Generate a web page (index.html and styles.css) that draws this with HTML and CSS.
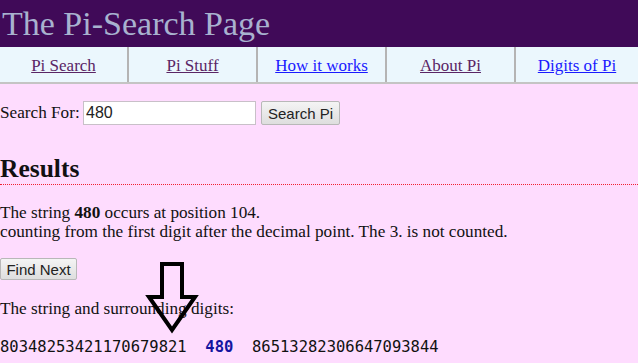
FILE: index.html
```html
<!DOCTYPE html>
<html lang="en">
<head>
  <meta charset="UTF-8">
  <title>The Pi-Search Page</title>
  <link rel="stylesheet" href="styles.css">
</head>
<body>
  <h1 class="banner">The Pi-Search Page</h1>
  <div class="nav">
    <div class="nav-cell"><a class="visited" href="#">Pi Search</a></div>
    <div class="nav-cell"><a class="visited" href="#">Pi Stuff</a></div>
    <div class="nav-cell"><a href="#">How it works</a></div>
    <div class="nav-cell"><a class="visited" href="#">About Pi</a></div>
    <div class="nav-cell"><a href="#">Digits of Pi</a></div>
  </div>

  <form class="search">
    <label for="q">Search For:</label>
    <input type="text" id="q" value="480">
    <button type="button">Search Pi</button>
  </form>

  <h2 class="results">Results</h2>
  <p class="found">The string <b>480</b> occurs at position 104.<br>counting from the first digit after the decimal point. The 3. is not counted.</p>
  <button type="button" class="next">Find Next</button>
  <p class="around">The string and surrounding digits:</p>
  <pre class="digits">80348253421170679821  <span class="hit">480</span>  86513282306647093844</pre>

  <!-- arrow drawn over the text -->
  <svg class="arrow" width="70" height="85" viewBox="140 255 70 85">
    <polygon points="162,264 182,264 182,297 195,297 172,330 149,297 162,297" fill="none" stroke="#000" stroke-width="4" stroke-linejoin="miter"/>
  </svg>
</body>
</html>
```

FILE: styles.css
```css
body {
  margin: 0;
  background-color: #fedcfe;
  font-family: "Liberation Serif", "Times New Roman", serif;
  font-size: 17.2px;
  color: #111;
  position: relative;
  height: 363px;
  overflow: hidden;
}

.banner {
  margin: 0;
  height: 47px;
  line-height: 47px;
  padding-left: 2px;
  background-color: #400a58;
  color: #a8b2cf;
  font-size: 34px;
  font-weight: normal;
}

.nav {
  display: flex;
  height: 35px;
  background-color: #ebf7fd;
  border-bottom: 2px solid #c4c4c4;
}

.nav-cell {
  flex: 0 0 129px;
  box-sizing: border-box;
  display: flex;
  align-items: center;
  justify-content: center;
  padding-top: 2px;
  border-right: 2px solid #b4b4b4;
  font-size: 17px;
}

.nav-cell:last-child {
  flex: 1;
  border-right: none;
}

.nav a {
  color: #1a1aff;
}

.nav a.visited {
  color: #5a2565;
}

.search {
  margin: 17px 0 0 0;
  display: flex;
  align-items: center;
  height: 24px;
}

.search label {
  width: 83px;
  white-space: nowrap;
}

.search input {
  width: 173px;
  height: 24px;
  box-sizing: border-box;
  border: 1px solid #c8c0c8;
  padding: 0 2px;
  font-family: "Liberation Sans", Arial, sans-serif;
  font-size: 16px;
  color: #222;
  margin: 0 5px 0 0;
}

button {
  font-family: "Liberation Sans", Arial, sans-serif;
  font-size: 15px;
  color: #222;
  background: linear-gradient(#f4f4f4, #dedede);
  border: 1px solid #b8b8b8;
  border-radius: 2px;
  padding: 0;
  margin: 0;
  white-space: nowrap;
}

.search button {
  width: 79px;
  height: 24px;
}

.results {
  margin: 30px 0 0 0;
  font-size: 25.5px;
  line-height: 28px;
  padding-bottom: 1px;
  border-bottom: 1px dotted #f02030;
}

.found {
  margin: 18px 0 0 0;
  line-height: 19px;
}

.next {
  display: block;
  margin-top: 17px;
  height: 22px;
  width: 77px;
}

.around {
  margin: 19px 0 0 0;
  line-height: 19px;
}

.digits {
  margin: 20px 0 0 0;
  font-family: "DejaVu Sans Mono", monospace;
  font-size: 15.5px;
  line-height: 19px;
  color: #111;
}

.digits .hit {
  color: #1414a0;
  font-weight: bold;
}

.arrow {
  position: absolute;
  left: 140px;
  top: 255px;
}
```
